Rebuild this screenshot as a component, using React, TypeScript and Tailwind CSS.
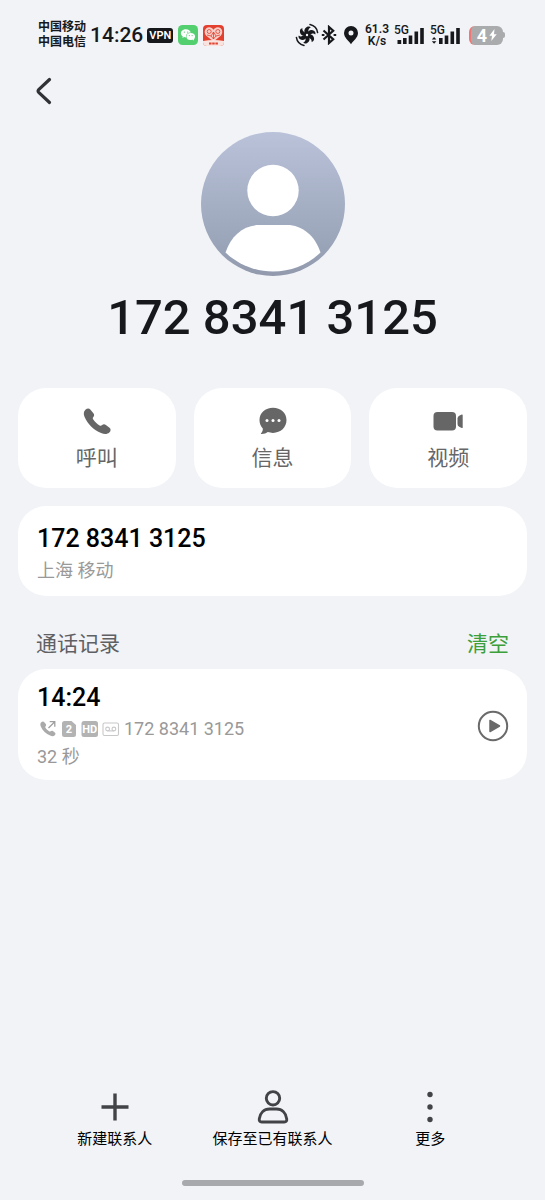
import React from 'react';

const CALLER = '172 8341 3125';

const SignalBars = ({ activity = false }: { activity?: boolean }) => (
  <div className="relative h-5 w-8">
    <span className="absolute left-0 top-0 -translate-x-px text-xs leading-[11px] font-medium">5G</span>
    <svg viewBox="0 0 32 20" className="h-5 w-8" fill="currentColor" aria-hidden="true">
      {activity ? (
        <path d="M.8 14.6 3.1 12l2.3 2.6zM.8 16.2l2.3 2.6 2.3-2.6z" />
      ) : (
        <rect x="2.5" y="15" width="3.7" height="4" />
      )}
      <rect x="8" y="13" width="3.6" height="6" />
      <rect x="13.7" y="10.5" width="3.6" height="8.5" />
      <rect x="19.5" y="6.5" width="3.6" height="12.5" />
      <rect x="25.2" y="3" width="3.6" height="16" />
    </svg>
  </div>
);

const StatusBar = () => (
  <header className="flex items-center justify-between pt-5 pr-10 pl-[38px] text-[#17181b]">
    <div className="flex items-center">
      <div className="text-xs leading-[15px] font-bold">
        <div>中国移动</div>
        <div>中国电信</div>
      </div>
      <time className="ml-1 text-[21px] leading-7 font-medium">14:26</time>
      <span className="ml-1 flex h-[15px] items-center rounded-[3px] bg-[#17181b] px-[2px] text-[11px] leading-[15px] font-semibold text-white">
        VPN
      </span>
      <svg viewBox="0 0 20 20" className="ml-[5px] h-5 w-5" aria-hidden="true">
        <rect width="20" height="20" rx="4.5" fill="#53cf70" />
        <path
          d="M8 4.2c-2.9 0-5.1 1.8-5.1 4.1 0 1.3.7 2.4 1.9 3.2l-.5 1.6 1.8-1c.6.2 1.2.3 1.9.3-.5-3 1.9-4.9 4.8-4.9C12.3 5.5 10.4 4.2 8 4.2z"
          fill="#fff"
        />
        <ellipse cx="12.7" cy="11.5" rx="4.3" ry="3.5" fill="#fff" />
        <path d="m14.5 14 1.5 1.8.1-2.8z" fill="#fff" />
        <g fill="#53cf70">
          <circle cx="6.3" cy="7.1" r=".7" />
          <circle cx="9.7" cy="7.1" r=".7" />
          <circle cx="11.3" cy="10.6" r=".6" />
          <circle cx="14.1" cy="10.6" r=".6" />
        </g>
      </svg>
      <svg viewBox="0 0 21 21" className="ml-[5px] h-[21px] w-[21px]" aria-hidden="true">
        <rect width="21" height="21" rx="4" fill="#e3402f" />
        <path
          d="M10.5 16.5 3 10.5C.3 7 2.2 2.3 6.2 2.3c2 0 3.3 1 4.3 2.4 1-1.4 2.3-2.4 4.3-2.4 4 0 5.9 4.7 3.2 8.2z"
          fill="#f6cfc9"
        />
        <g fill="none" stroke="#e3402f" strokeWidth=".8">
          <circle cx="6.2" cy="6.5" r="2" />
          <circle cx="14.8" cy="6.5" r="2" />
          <path d="m8 11 2.5-4 2.5 4M10.5 7v7M4 10l4 1 2.5 3 2.5-3 4-1" />
        </g>
        <path d="M0 16q10.5-2 21 0v1a4 4 0 0 1-4 4H4a4 4 0 0 1-4-4z" fill="#f9e3df" />
        <path d="M6 18.5h9" stroke="#e3402f" strokeWidth="2" strokeDasharray="2.5 .7" />
      </svg>
    </div>

    <div className="flex items-center">
      <svg viewBox="0 0 24 24" className="h-6 w-6" aria-hidden="true">
        <g fill="#17181b">
          {[0, 60, 120, 180, 240, 300].map((angle) => (
            <path
              key={angle}
              d="M10.8 11.2c-2.3-2.3-1.8-6 1.4-7.5 1.8-.6 3 .1 3.5 1-2.1.6-2.5 1.9-2.4 6.3z"
              transform={`rotate(${angle} 12 12)`}
            />
          ))}
        </g>
        <circle cx="12" cy="12" r="1.2" fill="#f1f3f7" />
        <g fill="none" stroke="#17181b" strokeWidth="1.5" strokeLinecap="round">
          <path d="M15 1.6c4 .9 7 3.7 7.6 8M9 22.4c-4-.9-7-3.7-7.6-8" />
        </g>
      </svg>
      <svg
        viewBox="0 0 16 20"
        className="ml-[2px] h-5 w-4"
        fill="none"
        stroke="currentColor"
        strokeWidth="2.2"
        aria-hidden="true"
      >
        <path d="m2.5 5.5 9.7 8.8L8 18V2l4.2 3.7-9.7 8.8" />
        <path d="M.8 10h2.6M12.6 10h2.6" />
      </svg>
      <svg viewBox="0 0 16 20" className="ml-[6px] h-5 w-4" fill="currentColor" aria-hidden="true">
        <path
          fillRule="evenodd"
          d="M8 1a7 7 0 0 0-7 7c0 4.5 4.5 7.5 7 11.2C10.5 15.5 15 12.5 15 8a7 7 0 0 0-7-7zm0 4.5a2.5 2.5 0 1 1 0 5 2.5 2.5 0 0 1 0-5z"
        />
      </svg>
      <div className="ml-[6px] text-center text-xs leading-3 font-semibold">
        <div>61.3</div>
        <div>K/s</div>
      </div>
      <div className="ml-[6px] flex gap-1">
        <SignalBars />
        <SignalBars activity />
      </div>
      <div className="ml-[6px] flex items-center">
        <div className="flex h-[19px] w-[34px] items-center justify-center gap-[2px] rounded-md border-l-2 border-[#ef7775] bg-[#aaabad] text-lg leading-[19px] font-bold text-white">
          4
          <svg viewBox="0 0 8 12" className="h-3 w-2" fill="currentColor" aria-hidden="true">
            <path d="M5.5 0 .3 6.8H3L2.3 12l5.4-6.8H5z" />
          </svg>
        </div>
        <span className="h-[6px] w-[2px] rounded-r bg-[#aaabad]" />
      </div>
    </div>
  </header>
);

const Avatar = () => (
  <svg viewBox="0 0 144 144" className="h-36 w-36" role="img" aria-label="联系人头像">
    <defs>
      <linearGradient id="avatarFill" x1="0" y1="0" x2="0" y2="1">
        <stop offset="0" stopColor="#bac2d9" />
        <stop offset="0.75" stopColor="#9ba6ba" />
        <stop offset="1" stopColor="#9299ad" />
      </linearGradient>
    </defs>
    <circle cx="72" cy="72" r="72" fill="url(#avatarFill)" />
    <circle cx="72" cy="58.5" r="25.7" fill="#fff" />
    <path
      d="M24.5 120.5C30 103.500 43 93 58 93h28c15 0 28 10.5 33.5 27.5C107 132.500 90 139.500 72 139.500s-35-7-47.5-19z"
      fill="#fff"
    />
  </svg>
);

const actions = [
  {
    label: '呼叫',
    icon: (
      <path d="M3.4 3.8C5 2.2 7 1.9 8.3 3.4l3.1 3.800c1.100 1.400.9 2.700-.2 4-.6.7-.5 1.400.1 2.300 1.700 2.500 3.600 4.300 6.300 5.900.9.5 1.600.5 2.300-.1 1.200-1.100 2.600-1.300 4-.3l3.600 2.700c1.600 1.300 1.400 3.400-.2 4.800-2.200 1.900-5 1.900-8.200.4C11.500 24 5.600 17.800 2.600 11 1.400 8.200 1.500 5.700 3.400 3.800z" />
    ),
  },
  {
    label: '信息',
    icon: (
      <>
        <path d="M15 1.800C7.300 1.800 1.500 6.900 1.500 14c0 3.500 1.300 6.200 3.300 8.600.2 2-.5 3.400-1.700 4.600-.4.500-.1.900.5.9 2.600-.1 4.700-.8 6.200-2 1.600.5 3.300.8 5.200.8 7.700 0 13.500-5.500 13.500-12.800S22.700 1.800 15 1.800z" />
        <g fill="#fff">
          <circle cx="9" cy="14.5" r="1.5" />
          <circle cx="15" cy="14.5" r="1.5" />
          <circle cx="21" cy="14.5" r="1.5" />
        </g>
      </>
    ),
  },
  {
    label: '视频',
    icon: (
      <>
        <rect x="0.5" y="6" width="22.5" height="18.5" rx="4" />
        <path d="M24.5 12.500c0-2 2-3.200 4.300-4 .6-.1.9.1.9.6v12.300c0 .5-.3.8-.9.6-2.300-.8-4.300-2-4.300-4z" />
      </>
    ),
  },
];

const ActionCard = ({ label, icon }: { label: string; icon: React.ReactNode }) => (
  <button
    type="button"
    className="flex h-[100px] flex-1 flex-col items-center rounded-[28px] bg-white pt-[18px] text-[#666666]"
  >
    <svg viewBox="0 0 30 30" className="h-[30px] w-[30px]" fill="currentColor" aria-hidden="true">
      {icon}
    </svg>
    <span className="mt-2 text-[21px] leading-7">{label}</span>
  </button>
);

const CallBadges = () => (
  <svg viewBox="0 0 80 18" className="h-[18px] w-20" aria-hidden="true">
    {/* Outgoing call */}
    <path
      d="M1.3 2.2c1.2-1.1 2.4-.9 3.2.2l1.300 1.700c.6 1 .3 1.700-.3 2.400-.4.500-.3.900.1 1.500 1 1.500 2 2.400 3.500 3.300.6.300 1 .3 1.500-.1.700-.6 1.500-.7 2.300-.1l1.900 1.500c1 .8.9 1.900 0 2.700-1.200 1.100-2.800 1.100-4.600.3C6 14.100 2.600 10.500.8 6.500.1 4.700.2 3.200 1.300 2.200z"
      fill="#aaaaaa"
    />
    <path d="m8.5 8 6-6M9.700 1.700h5.100v5.100" fill="none" stroke="#a0a0a0" strokeWidth="1.3" />
    {/* SIM card */}
    <path
      d="M24.5 1h7L36 5v9.500a2.500 2.500 0 0 1-2.500 2.500h-9a2.500 2.500 0 0 1-2.500-2.500v-11A2.500 2.500 0 0 1 24.500 1z"
      fill="#b3b3b3"
    />
    <text x="29" y="13" textAnchor="middle" fontSize="11" fontWeight="700" fill="#fff">2</text>
    {/* HD voice */}
    <rect x="41.5" y="1" width="16.5" height="16" rx="2.5" fill="#b3b3b3" />
    <text x="49.7" y="13" textAnchor="middle" fontSize="11" fontWeight="700" fill="#fff">HD</text>
    {/* Recording */}
    <g fill="none" stroke="#c8c8c8" strokeWidth="1.1">
      <rect x="63" y="3" width="15.5" height="12.5" rx="1.5" />
      <circle cx="67.6" cy="9" r="1.9" />
      <circle cx="73.9" cy="9" r="1.9" />
      <path d="M67.6 10.9h6.3" />
    </g>
  </svg>
);

const bottomActions = [
  {
    label: '新建联系人',
    icon: <path d="M18 4.5v27M4.5 18h27" strokeWidth="3.4" />,
  },
  {
    label: '保存至已有联系人',
    icon: (
      <>
        <circle cx="18" cy="9.3" r="6.7" />
        <path d="M14.5 20h7c5.500 0 9.500 4 10.200 9.800.3 2.200-.5 3.200-2.400 3.200H6.700c-1.900 0-2.700-1-2.400-3.200C5 24 9 20 14.500 20z" />
      </>
    ),
  },
  {
    label: '更多',
    icon: (
      <g fill="currentColor" stroke="none">
        <circle cx="18" cy="5.5" r="2.7" />
        <circle cx="18" cy="18" r="2.7" />
        <circle cx="18" cy="30.5" r="2.7" />
      </g>
    ),
  },
];

export default function App() {
  return (
    <div className="flex min-h-screen flex-col bg-[#f1f3f7] font-['Roboto','Noto_Sans_CJK_SC',sans-serif] text-black">
      <StatusBar />

      <main className="flex flex-1 flex-col px-[18px]">
        <button type="button" aria-label="返回" className="mt-[25px] ml-[15px] h-8 w-6 text-[#303236]">
          <svg
            viewBox="0 0 24 32"
            className="h-8 w-6"
            fill="none"
            stroke="currentColor"
            strokeWidth="3.2"
            strokeLinecap="round"
            strokeLinejoin="round"
          >
            <path d="M16.5 4.5 5.7 14.7q-1.3 1.3 0 2.6l10.8 10.2" />
          </svg>
        </button>

        <section className="mt-[25px] flex flex-col items-center">
          <Avatar />
          <h1 className="mt-3 text-[49px] leading-[60px] font-medium text-[#17181b]">{CALLER}</h1>
        </section>

        <div className="mt-10 flex gap-[18px]">
          {actions.map((action) => (
            <ActionCard key={action.label} {...action} />
          ))}
        </div>

        <section className="mt-[18px] rounded-[28px] bg-white px-[19px] pt-[17px] pb-3">
          <p className="text-[25px] leading-8 font-medium">{CALLER}</p>
          <p className="mt-[3px] text-lg leading-[26px] text-[#999999]">上海 移动</p>
        </section>

        <section>
          <div className="mt-[34px] flex items-center justify-between px-[18px] text-[21px] leading-7">
            <h2 className="text-[#5f6063]">通话记录</h2>
            <button type="button" className="text-[#3c9f3a]">清空</button>
          </div>
          <div className="mt-[11px] flex items-center justify-between rounded-[28px] bg-white pt-[13px] pr-[18px] pb-[10px] pl-[19px]">
            <div>
              <p className="text-[25px] leading-8 font-medium">14:24</p>
              <div className="mt-[2px] flex items-center gap-1 pl-[3px] text-lg leading-[26px] text-[#999999]">
                <CallBadges />
                <span>{CALLER}</span>
              </div>
              <p className="mt-[2px] text-lg leading-[26px] text-[#999999]">32 秒</p>
            </div>
            <button type="button" aria-label="播放录音" className="text-[#6a6a6a]">
              <svg viewBox="0 0 32 32" className="h-8 w-8">
                <circle cx="16" cy="16" r="14.2" fill="none" stroke="currentColor" strokeWidth="2" />
                <path
                  d="M13 10.5v11l9.5-5.5z"
                  fill="currentColor"
                  stroke="currentColor"
                  strokeWidth="1.5"
                  strokeLinejoin="round"
                />
              </svg>
            </button>
          </div>
        </section>
      </main>

      <footer className="px-9 pb-[14px]">
        <nav className="flex">
          {bottomActions.map(({ label, icon }) => (
            <button key={label} type="button" className="flex flex-1 flex-col items-center">
              <svg
                viewBox="0 0 36 36"
                className="h-9 w-9 text-[#424346]"
                fill="none"
                stroke="currentColor"
                strokeWidth="2.9"
                aria-hidden="true"
              >
                {icon}
              </svg>
              <span className="mt-1 text-[15px] leading-5 whitespace-nowrap">{label}</span>
            </button>
          ))}
        </nav>
        <div className="mx-auto mt-[31px] h-[6px] w-[182px] rounded-full bg-[#a8a9ac]" />
      </footer>
    </div>
  );
}
